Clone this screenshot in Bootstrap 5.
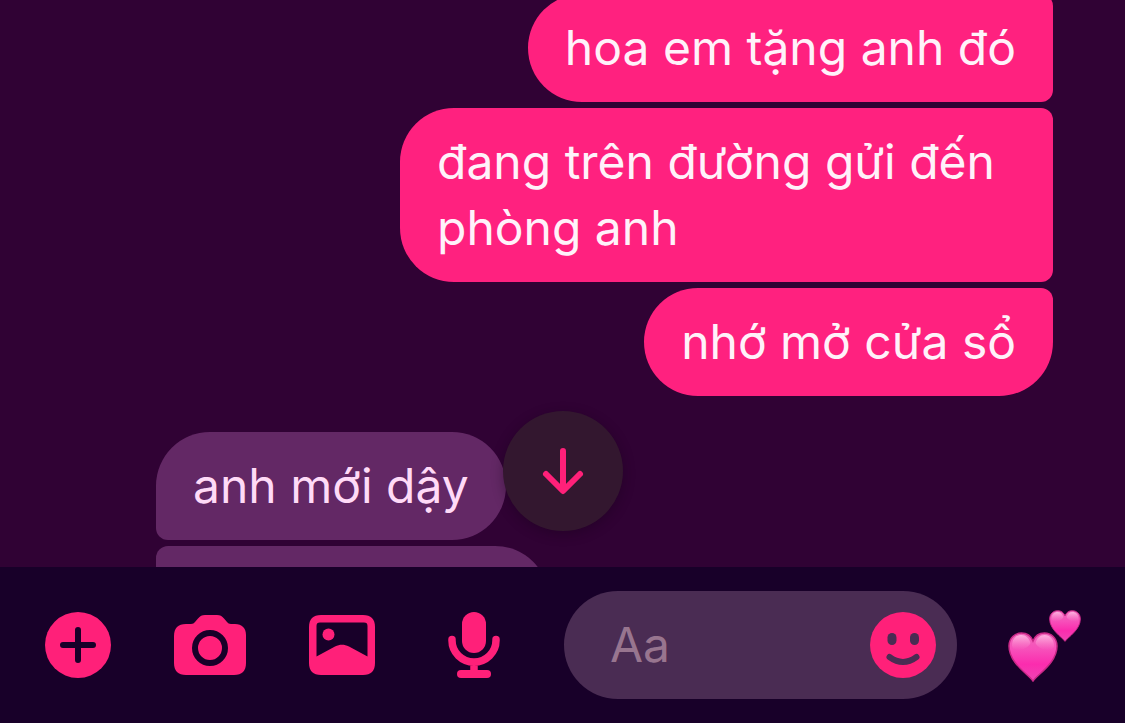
<!DOCTYPE html>
<html lang="vi">
<head>
<meta charset="utf-8">
<meta name="viewport" content="width=device-width, initial-scale=1">
<title>Chat</title>
<link href="https://cdn.jsdelivr.net/npm/bootstrap@5.3.0/dist/css/bootstrap.min.css" rel="stylesheet">
<style>
  :root { --pink: #ff2079; --bar: #180029; --field: #4a2c53; }
  body { background: #300234; font-family: Inter, "Noto Sans", sans-serif; font-size: 48px; line-height: 66px; }
  .thread { margin-top: -6px; padding: 0 72px 0 156px; gap: 6px; }
  .bubble { max-width: 653px; min-height: 108px; padding: 21px 37px; border-radius: 54px; overflow-wrap: break-word; }
  .sent { background: #ff217f; color: #fff2fa; align-self: flex-end; border-top-right-radius: 12px; border-bottom-right-radius: 12px; }
  .sent-last { border-bottom-right-radius: 54px; margin-bottom: 30px; }
  .received { background: #632865; color: #ffdaf7; align-self: flex-start; border-bottom-left-radius: 12px; }
  .received-next { width: 393px; border-top-left-radius: 12px; }
  .jump { width: 120px; height: 120px; bottom: 36px; background: #33172f; box-shadow: 0 3px 12px rgba(20, 0, 24, .35); }
  .composer { background: var(--bar); padding: 24px 0 24px 12px; }
  .tool { width: 132px; height: 108px; }
  .field { background: var(--field); margin-left: 24px; padding: 0 21px 0 46px; height: 108px; min-width: 0; }
  .field input { color: #ffdaf7; font-size: 48px; line-height: 66px; outline: 0; min-width: 0; }
  .field input::placeholder { color: #98758f; opacity: 1; }
  .quick { width: 168px; height: 108px; }
  svg { display: block; }
</style>
</head>
<body>
<div class="d-flex flex-column vh-100 overflow-hidden">
  <main class="flex-grow-1 position-relative overflow-hidden">
    <div class="thread d-flex flex-column">
      <div class="bubble sent">hoa em tặng anh đó</div>
      <div class="bubble sent">đang trên đường gửi đến phòng anh</div>
      <div class="bubble sent sent-last">nhớ mở cửa sổ</div>
      <div class="bubble received">anh mới dậy</div>
      <div class="bubble received received-next"></div>
    </div>
    <button type="button" class="jump btn border-0 p-0 rounded-circle position-absolute start-50 translate-middle-x d-flex align-items-center justify-content-center" aria-label="Cuộn xuống">
      <svg width="48" height="54" viewBox="0 0 48 54" fill="none" stroke="#ff2079" stroke-width="6" stroke-linecap="round" stroke-linejoin="round"><path d="M24 7v39M7 30l17 17 17-17"/></svg>
    </button>
  </main>
  <footer class="composer d-flex align-items-center flex-shrink-0">
    <button type="button" class="tool btn border-0 p-0 flex-shrink-0 d-flex align-items-center justify-content-center" aria-label="Thêm">
      <svg width="66" height="66" viewBox="0 0 66 66"><circle cx="33" cy="33" r="33" fill="#ff2079"/><path d="M33 18v30M18 33h30" stroke="#180029" stroke-width="6" stroke-linecap="round"/></svg>
    </button>
    <button type="button" class="tool btn border-0 p-0 flex-shrink-0 d-flex align-items-center justify-content-center" aria-label="Máy ảnh">
      <svg width="72" height="60" viewBox="0 0 72 60"><path fill="#ff2079" d="M12 9h5c2 0 3-1 4-2l3-3.500C26 1 28 0 31 0h12c3 0 5 1 7 3.500L53 7c1 1 2 2 4 2h4c7 0 11 4 11 11v28c0 8-4 12-12 12H12C4 60 0 56 0 48V21C0 13 4 9 12 9z"/><circle cx="36" cy="33" r="15" fill="none" stroke="#180029" stroke-width="6"/></svg>
    </button>
    <button type="button" class="tool btn border-0 p-0 flex-shrink-0 d-flex align-items-center justify-content-center" aria-label="Ảnh">
      <svg width="66" height="60" viewBox="0 0 66 60"><path fill="#ff2079" fill-rule="evenodd" d="M12 0h42c8 0 12 4 12 12v36c0 8-4 12-12 12H12C4 60 0 56 0 48V12C0 4 4 0 12 0zM11 7.500c-2.500 0-3.500 1-3.500 3.500v30.500L26 31.500c5-2.500 9-2.500 14 0l18.500 10V11c0-2.500-1-3.500-3.500-3.500z"/><circle cx="19.500" cy="19.500" r="6" fill="#ff2079"/></svg>
    </button>
    <button type="button" class="tool btn border-0 p-0 flex-shrink-0 d-flex align-items-center justify-content-center" aria-label="Ghi âm">
      <svg width="52" height="66" viewBox="0 0 52 66"><rect x="14" width="24" height="41" rx="12" fill="#ff2079"/><path d="M4 27.500v1a22 21.500 0 0 0 44 0v-1M26 51v11" fill="none" stroke="#ff2079" stroke-width="7.500" stroke-linecap="round"/><rect x="9" y="58" width="34" height="8" rx="4" fill="#ff2079"/></svg>
    </button>
    <div class="field flex-grow-1 rounded-pill d-flex align-items-center">
      <input type="text" class="flex-grow-1 w-100 border-0 bg-transparent p-0" placeholder="Aa" aria-label="Tin nhắn">
      <button type="button" class="btn border-0 p-0 flex-shrink-0" aria-label="Biểu tượng cảm xúc">
        <svg width="66" height="66" viewBox="0 0 66 66"><circle cx="33" cy="33" r="33" fill="#ff2079"/><g fill="#4a2c53"><rect x="17.500" y="21" width="9" height="12" rx="4.500"/><rect x="40" y="21" width="9" height="12" rx="4.500"/></g><path d="M19.500 45q13.500 10 27 0" fill="none" stroke="#4a2c53" stroke-width="6" stroke-linecap="round"/></svg>
      </button>
    </div>
    <button type="button" class="quick btn border-0 p-0 flex-shrink-0 d-flex align-items-center justify-content-center" aria-label="Gửi trái tim">
      <svg width="82" height="74" viewBox="0 0 82 74">
        <defs>
          <linearGradient id="body" x1="0" y1="0" x2="0" y2="1"><stop offset="0" stop-color="#f06abb"/><stop offset=".35" stop-color="#f74fba"/><stop offset=".65" stop-color="#fb2cae"/><stop offset="1" stop-color="#ee45b4"/></linearGradient>
          <linearGradient id="shine" x1="0" y1="0" x2="0" y2="1"><stop offset="0" stop-color="#ffb9e4" stop-opacity=".9"/><stop offset="1" stop-color="#ff8fd2" stop-opacity="0"/></linearGradient>
          <g id="heart">
            <path fill="url(#body)" stroke="#c92887" stroke-width="1.500" d="M25 49C20 42 1 31 1 14 1 6 7 1 13.500 1 19 1 23 4 25 9 27 4 31 1 36.500 1 43 1 49 6 49 14 49 31 30 42 25 49z"/>
            <path fill="url(#shine)" d="M4 14C4 7 8 3 13.500 3 18 3 21 6 22.500 11 20 18 5 21 4 14zM46 14C46 7 42 3 36.500 3 32 3 29 6 27.500 11 30 18 45 21 46 14z"/>
          </g>
        </defs>
        <use href="#heart" transform="translate(8 24)"/>
        <use href="#heart" transform="translate(49 2) scale(.64)"/>
      </svg>
    </button>
  </footer>
</div>
<script src="https://cdn.jsdelivr.net/npm/bootstrap@5.3.0/dist/js/bootstrap.bundle.min.js"></script>
</body>
</html>
